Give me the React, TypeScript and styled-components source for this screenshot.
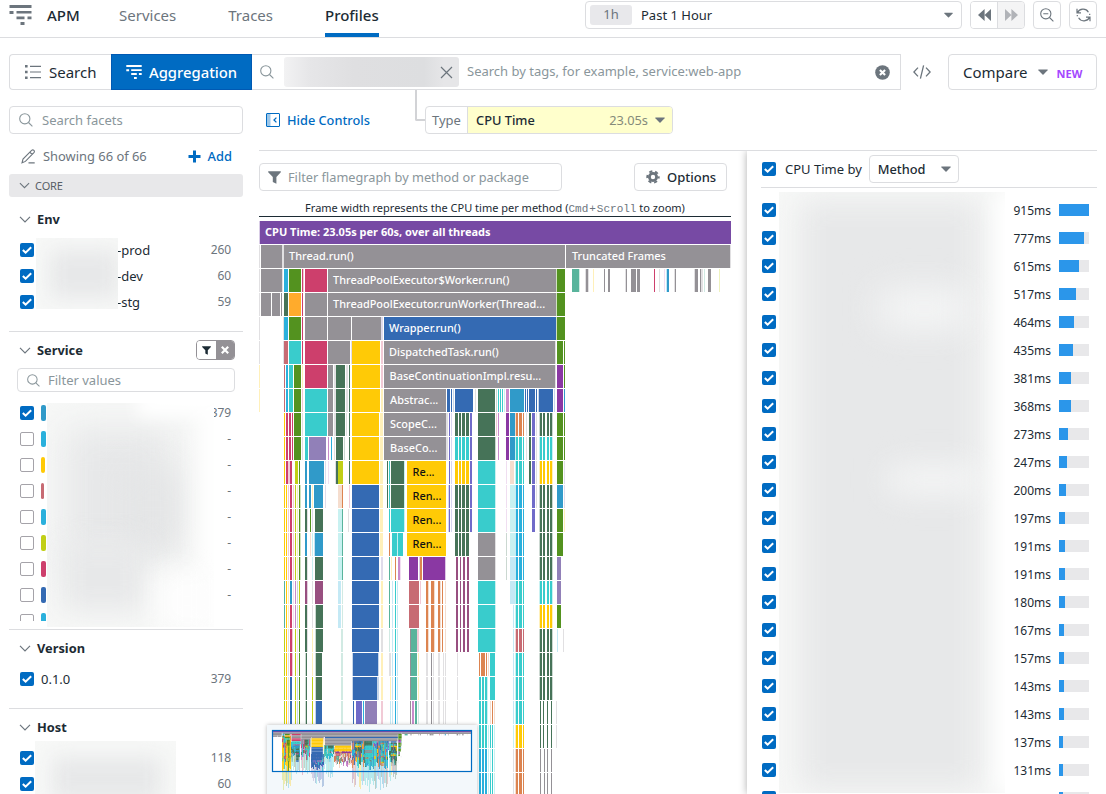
import React from 'react';
import styled, { createGlobalStyle, css } from 'styled-components';

const ink = '#1c2b34';
const muted = '#6c757d';
const faint = '#8a969b';
const line = '#dcdde0';
const blue = '#006bc2';

const Global = createGlobalStyle`
  * { box-sizing: border-box; }
  html, body { margin: 0; height: 794px; overflow: hidden; background: #fff; }
  body { font-family: 'Noto Sans', sans-serif; font-size: 13px; color: ${ink}; }
  svg { display: block; flex: none; }
`;

const Page = styled.div`
  width: 1106px;
  height: 794px;
  overflow: hidden;
  display: flex;
  flex-direction: column;
`;

/* ---------- top navigation ---------- */
const TopNav = styled.header`
  height: 38px;
  flex: none;
  display: flex;
  justify-content: space-between;
  border-bottom: 1px solid ${line};
  padding: 0 9px;
`;
const NavLinks = styled.nav`
  display: flex;
  height: 37px;
`;
const Brand = styled.div`
  display: flex;
  width: 110px;
  gap: 15px;
  font-size: 15px;
  font-weight: 500;
  line-height: 31px;
  svg { margin-top: 5px; }
`;
const NavLink = styled.a<{ $active?: boolean; $gap?: number }>`
  font-size: 15px;
  line-height: 31px;
  height: 37px;
  margin-right: ${p => p.$gap ?? 0}px;
  font-weight: ${p => (p.$active ? 500 : 400)};
  color: ${p => (p.$active ? ink : muted)};
  border-bottom: ${p => (p.$active ? `4px solid ${blue}` : 'none')};
`;
const TimeControls = styled.div`
  display: flex;
  padding-top: 1px;
  gap: 8px;
`;
const boxed = css`
  border: 1px solid ${line};
  border-radius: 4px;
  background: #fff;
  display: flex;
  align-items: center;
`;
const TimeSelect = styled.div`
  ${boxed}
  width: 377px;
  height: 28px;
  padding: 0 8px 0 4px;
  font-size: 13px;
  svg { margin-left: auto; }
`;
const TimeBadge = styled.span`
  width: 42px;
  height: 20px;
  margin-right: 9px;
  border-radius: 3px;
  background: #e8e8eb;
  color: ${muted};
  line-height: 19px;
  text-align: center;
`;
const ButtonPair = styled.div`
  ${boxed}
  width: 55px;
  height: 28px;
  overflow: hidden;
`;
const PairButton = styled.button<{ $off?: boolean }>`
  flex: 1;
  height: 26px;
  padding: 0;
  display: grid;
  place-items: center;
  border: 0;
  border-left: ${p => (p.$off ? `1px solid ${line}` : '0')};
  background: ${p => (p.$off ? '#f4f4f5' : '#fff')};
`;
const IconButton = styled.button`
  ${boxed}
  justify-content: center;
  width: 28px;
  height: 28px;
  padding: 0;
`;

/* ---------- query bar ---------- */
const QueryBar = styled.div`
  display: flex;
  height: 36px;
  flex: none;
  margin: 16px 9px 0;
`;
const ModeButton = styled.button<{ $active?: boolean; $w: number }>`
  display: flex;
  align-items: center;
  gap: ${p => (p.$active ? 7 : 8)}px;
  width: ${p => p.$w}px;
  height: 36px;
  padding: 0 0 0 ${p => (p.$active ? 14 : 15)}px;
  font: ${p => (p.$active ? '500 14.8px' : '400 15px')} 'Noto Sans', sans-serif;
  color: ${p => (p.$active ? '#fff' : ink)};
  background: ${p => (p.$active ? blue : '#fff')};
  border: 1px solid ${p => (p.$active ? '#0059b3' : line)};
  border-right-width: ${p => (p.$active ? 1 : 0)}px;
  border-radius: ${p => (p.$active ? '0' : '4px 0 0 4px')};
`;
const QueryInput = styled.div`
  display: flex;
  align-items: center;
  width: 649px;
  height: 36px;
  border: 1px solid ${line};
  border-left: 0;
  padding: 0 10px 0 8px;
  color: ${faint};
`;
const Chip = styled.div`
  width: 175px;
  height: 30px;
  margin: 0 8px 0 10px;
  padding-right: 6px;
  border-radius: 3px;
  display: flex;
  align-items: center;
  justify-content: flex-end;
  background: linear-gradient(90deg, #f2f2f3 0, #e6e6e8 26px, #dfdfe1 70px, #dddee0 140px, #e6e6e8 160px);
`;
const QueryHint = styled.span`
  flex: 1;
  line-height: 20px;
  padding-bottom: 2px;
`;
const CodeIcon = styled.div`
  width: 47px;
  display: grid;
  place-items: center;
  padding-right: 5px;
`;
const CompareButton = styled.button`
  ${boxed}
  width: 149px;
  height: 36px;
  padding: 0 0 0 14px;
  font: 15px 'Noto Sans', sans-serif;
  color: ${ink};
  svg { margin-left: 10px; }
`;
const NewTag = styled.span`
  margin: 3px 0 0 9px;
  font-size: 11px;
  font-weight: 700;
  color: #a447ff;
`;

/* ---------- body columns ---------- */
const Body = styled.div`
  display: flex;
  gap: 16px;
  padding: 16px 9px 0;
  flex: 1;
  min-height: 0;
`;
const Sidebar = styled.aside`
  width: 234px;
  flex: none;
  display: flex;
  flex-direction: column;
`;
const Input = styled.div<{ $w?: number; $h?: number; $size?: number; $gap?: number }>`
  ${boxed}
  width: ${p => (p.$w ? `${p.$w}px` : '100%')};
  height: ${p => p.$h ?? 28}px;
  padding-left: ${p => (p.$size ? 8 : 9)}px;
  gap: ${p => p.$gap ?? 8}px;
  flex: none;
  font-size: ${p => p.$size ?? 13}px;
  color: ${faint};
`;
const FacetSummary = styled.div`
  display: flex;
  align-items: center;
  height: 40px;
  flex: none;
  padding: 4px 11px 0 12px;
  gap: 7px;
  font-size: 12.9px;
  color: ${muted};
`;
const AddLink = styled.a`
  display: flex;
  align-items: center;
  gap: 7px;
  margin-left: auto;
  font-weight: 500;
  color: ${blue};
`;
const GroupBar = styled.div`
  display: flex;
  align-items: center;
  height: 23px;
  flex: none;
  gap: 5px;
  padding-left: 10px;
  border-radius: 3px;
  background: #e8e8ea;
  font-size: 11px;
  letter-spacing: -0.1px;
  color: #585f67;
  svg { width: 11px; }
`;
const Facet = styled.section<{ $top?: number; $bottom?: number }>`
  position: relative;
  flex: none;
  padding-top: ${p => p.$top ?? 5}px;
  padding-bottom: ${p => p.$bottom ?? 16}px;
  border-bottom: 1px solid ${line};
`;
const FacetTitle = styled.h3`
  display: flex;
  align-items: center;
  height: 26px;
  margin: 0 0 5px;
  padding: 0 8px 0 10px;
  gap: 6px;
  font-size: 12.8px;
  font-weight: 700;
`;
const FacetActions = styled.div`
  display: flex;
  width: 39px;
  height: 20px;
  margin-left: auto;
  border: 1px solid #949196;
  border-radius: 4px;
  overflow: hidden;
`;
const FacetAction = styled.span<{ $dark?: boolean }>`
  flex: 1;
  display: grid;
  place-items: center;
  background: ${p => (p.$dark ? '#949196' : '#fff')};
`;
const FacetInput = styled.div`
  padding: 0 8px;
`;
const ValueList = styled.div<{ $h?: number }>`
  margin-top: ${p => (p.$h ? 8 : 0)}px;
  height: ${p => (p.$h ? `${p.$h}px` : 'auto')};
  overflow: hidden;
`;
const ValueRow = styled.div`
  display: flex;
  align-items: center;
  height: 26px;
  padding: 0 12px 0 11px;
`;
const Swatch = styled.span<{ $c: string; $w: number }>`
  width: ${p => p.$w}px;
  height: 16px;
  margin-left: 7px;
  border-radius: 2px;
  background: ${p => p.$c};
`;
const ValueName = styled.span<{ $indent?: number }>`
  margin-left: ${p => p.$indent ?? 7}px;
  line-height: 20px;
`;
const ValueCount = styled.span`
  margin: -2px 0 0 auto;
  font-size: 12px;
  letter-spacing: -0.1px;
  color: ${muted};
`;
const CheckSquare = styled.span<{ $on?: boolean }>`
  width: 14px;
  height: 14px;
  flex: none;
  display: grid;
  place-items: center;
  border-radius: 2px;
  background: ${p => (p.$on ? blue : '#fff')};
  border: ${p => (p.$on ? '0' : '1px solid #a5a3a9')};
`;

/* hidden names are covered by soft grey patches */
const Redaction = styled.div<{ $x: number; $y: number; $w: number; $h: number }>`
  position: absolute;
  left: ${p => p.$x}px;
  top: ${p => p.$y}px;
  width: ${p => p.$w}px;
  height: ${p => p.$h}px;
  overflow: hidden;
  background: #f7f8f7;
`;
const Smudge = styled.div<{ $x: number; $y: number; $w: number; $h: number; $c?: string; $b?: number }>`
  position: absolute;
  left: ${p => p.$x}px;
  top: ${p => p.$y}px;
  width: ${p => p.$w}px;
  height: ${p => p.$h}px;
  background: ${p => p.$c ?? '#e7e8e9'};
  filter: blur(${p => p.$b ?? 10}px);
`;

/* ---------- main column ---------- */
const Main = styled.main`
  flex: 1;
  min-width: 0;
  display: flex;
  flex-direction: column;
`;
const ControlsRow = styled.div`
  display: flex;
  height: 45px;
  flex: none;
  border-bottom: 1px solid ${line};
`;
const HideControls = styled.a`
  display: flex;
  align-items: center;
  gap: 7px;
  width: 156px;
  height: 28px;
  padding-left: 7px;
  color: ${blue};
  font-size: 12.75px;
  font-weight: 500;
`;
const Elbow = styled.div`
  width: 10px;
  height: 31px;
  margin-top: -16px;
  border-left: 2px solid #d2d3d6;
  border-bottom: 2px solid #d2d3d6;
  border-radius: 0 0 0 2px;
`;
const TypeSelect = styled.div`
  ${boxed}
  width: 248px;
  height: 28px;
  overflow: hidden;
  color: ${muted};
`;
const TypeLabel = styled.span`
  width: 41px;
  padding-left: 6px;
`;
const TypeValue = styled.div`
  flex: 1;
  height: 26px;
  display: flex;
  align-items: center;
  padding: 0 7px 0 8px;
  border-left: 1px solid ${line};
  background: #ffffcc;
  color: ${ink};
  font-size: 12.8px;
  font-weight: 500;
`;
const TypeTime = styled.span`
  margin: 0 7px 0 auto;
  font-weight: 400;
  color: #858b7a;
`;
const Panels = styled.div`
  flex: 1;
  min-height: 0;
  display: flex;
  overflow: hidden;
`;
const FlamePanel = styled.section`
  position: relative;
  width: 488px;
  flex: none;
  padding-top: 12px;
`;
const FlameTools = styled.div`
  display: flex;
  justify-content: space-between;
  width: 468px;
`;
const OptionsButton = styled.button`
  ${boxed}
  width: 93px;
  height: 28px;
  gap: 7px;
  padding: 0 0 0 11px;
  font: 500 13px 'Noto Sans', sans-serif;
  color: ${ink};
`;
const Caption = styled.div`
  width: 472px;
  height: 26px;
  padding: 8px 0 0;
  line-height: 18px;
  font-size: 11px;
  text-align: center;
  border-bottom: 1px solid ${ink};
  margin-bottom: 4px;
  white-space: nowrap;
`;
const Kbd = styled.span<{ $joint?: boolean }>`
  font-family: 'Liberation Mono', monospace;
  color: ${muted};
  margin: 0 ${p => (p.$joint ? 1 : 0)}px;
`;
const Minimap = styled.div`
  position: absolute;
  left: 8px;
  top: 574px;
  width: 210px;
  height: 90px;
  background: #f3f8fb;
  box-shadow: 0 0 4px rgba(0, 0, 0, 0.28);
`;

const MethodPanel = styled.section`
  position: relative;
  flex: 1;
  background: #fff;
  padding-left: 14px;
  box-shadow: 0 0 8px rgba(0, 0, 0, 0.32);
`;
const MethodHead = styled.div`
  display: flex;
  align-items: center;
  height: 37px;
  padding: 0 0 0 1px;
  border-bottom: 1px solid ${line};
`;
const MethodHeadLabel = styled.span`
  margin: 0 7px 0 9px;
`;
const MethodSelect = styled.div`
  ${boxed}
  width: 90px;
  height: 28px;
  padding: 0 7px 0 8px;
  font-size: 12.8px;
  font-weight: 500;
  justify-content: space-between;
`;
const MethodList = styled.div`
  padding: 8px 8px 0 1px;
`;
const MethodRow = styled.div`
  display: flex;
  align-items: center;
  height: 28px;
`;
const MethodTime = styled.span`
  margin: 1px 8px 0 auto;
  font-size: 12px;
`;
const Track = styled.div`
  width: 30px;
  height: 12px;
  background: #e8e8ea;
`;
const Fill = styled.div`
  height: 12px;
  background: #2b96ea;
`;

/* ---------- icons ---------- */
const Lens = ({ size = 14, minus }: { size?: number; minus?: boolean }) => (
  <svg width={size} height={size} viewBox="0 0 14 14" fill="none" stroke={minus ? muted : faint} strokeWidth="1.1">
    <circle cx="5.8" cy="5.8" r="5.1" />
    <path d={minus ? 'M9.5 9.5 13.4 13.4M3.3 5.8h5' : 'M9.5 9.5 13.4 13.4'} />
  </svg>
);
const Caret = ({ w = 10 }: { w?: number }) => (
  <svg width={w} height="6" viewBox="0 0 10 6" fill={muted}><path d="M.6.4h8.8q.7.2.2.8L5.5 5.4q-.5.5-1 0L.4 1.2Q-.1.6.6.4Z" /></svg>
);
const Chevron = () => (
  <svg width="12" height="7" viewBox="0 0 12 7" fill="none" stroke={muted} strokeWidth="1.2"><path d="M1 .8 6 5.8 11 .8" /></svg>
);
const Funnel = ({ size, color }: { size: number; color: string }) => (
  <svg width={size} height={size} viewBox="0 0 13 13" fill={color}><path d="M.2.3h12.6v1L8.4 6v6.8L4.8 11V6L.2 1.3Z" /></svg>
);
const FlameIcon = ({ w, h, color }: { w: number; h: number; color: string }) => (
  <svg width={w} height={h} viewBox="0 0 22 20" fill={color}>
    <path d="M0 0h22v3H0zM0 6h4v3H0zM7 6h15v2.6H7zM7 11.4h8v2.8H7zM18 11.4h4v2.8h-4zM11 17h4v3h-4z" />
  </svg>
);
const ListIcon = () => (
  <svg width="16" height="14" viewBox="0 0 16 14" fill={muted}>
    <path d="M0 0h2.6v2.6H0zM0 5.7h2.6v2.6H0zM0 11.4h2.6V14H0zM5 .7h11v1.2H5zM5 6.4h11v1.2H5zM5 12.1h11v1.2H5z" />
  </svg>
);
const Check = ({ on = true }: { on?: boolean }) => (
  <CheckSquare $on={on}>
    {on && <svg width="10" height="8" viewBox="0 0 10 8" fill="none" stroke="#fff" strokeWidth="2"><path d="M.8 4 3.6 6.6 9.2 1.2" /></svg>}
  </CheckSquare>
);
const Rewind = ({ flip }: { flip?: boolean }) => (
  <svg width="13" height="12" viewBox="0 0 13 11" preserveAspectRatio="none" fill={flip ? '#b1b3b8' : muted}>
    <path d={flip ? 'M0 0 6.4 5.5 0 11ZM6.4 0 13 5.5 6.4 11Z' : 'M6.6 0v11L0 5.5ZM13 0v11L6.6 5.5Z'} />
  </svg>
);
const Refresh = () => (
  <svg width="15" height="14" viewBox="0 0 15 14" fill="none" stroke={muted} strokeWidth="1.2">
    <path d="M1 .8v4h4M1.4 4.6C3.5.6 9.8-.3 12.4 4.2M14 13.2v-4h-4M13.6 9.4c-2.1 4-8.4 4.9-11 .4M13.7 7V5.8M1.3 7v1.2" />
  </svg>
);
const Gear = () => (
  <svg width="14" height="14" viewBox="0 0 14 14" fill="none" stroke={muted}>
    <circle cx="7" cy="7" r="3.6" strokeWidth="2.8" />
    <circle cx="7" cy="7" r="5.7" strokeWidth="2" strokeDasharray="3.1 2.87" strokeDashoffset="1.5" />
  </svg>
);
const Pencil = () => (
  <svg width="15" height="15" viewBox="0 0 15 15" fill="none" stroke={muted} strokeWidth="1.1">
    <path d="M1 13.8 2 10 10.6 1.4q1.2-1 2.3 0 1 1.1 0 2.3L4.4 12.4ZM8.8 3.1l2.4 2.4M7.5 13.9h6.2" />
  </svg>
);
const HideIcon = () => (
  <svg width="14" height="14" viewBox="0 0 14 14" fill="none" stroke={blue}>
    <path d="M1 1h3.5v12H1z" fill="#9cc6e8" stroke="none" />
    <rect x=".5" y=".5" width="13" height="13" rx=".5" />
    <path d="M10.4 4.6 8 7l2.4 2.4" strokeWidth="1.3" />
  </svg>
);

/* ---------- flame graph ---------- */
const palette: Record<string, string> = {
  g: '#949196', G: '#53921f', D: '#467358', t: '#39cccc', y: '#ffca06', b: '#346ab3',
  B: '#309ac9', c: '#2ab0dc', m: '#cd3f6c', p: '#8a38a3', l: '#9180b8', i: '#706bc9',
  o: '#ffab2c', O: '#dc8450', r: '#c76b73', k: '#984f80', s: '#59b49c', L: '#c1cf16',
  a: '#c98acb', v: '#774aa4',
};

/* "start-end colour" in chart units; a trailing ~ marks a pale sliver */
const yTail = ' 380-383y~ ';
const low = ' 478-495t 495-496t~ ';
const dup = (c: string) => ` 455-458${c} 459-461${c} 462-465${c} 466-469${c} `;
const mid = (c: string) => ` 515-516${c}~ 516-518${c} 519-521${c} 521-522${c} 523-524${c} `;
const far = (c: string) => ` 539-540${c}~ 540-542${c} 543-545${c} 547-549${c} 550-552${c} 552-553${c}~ `;
const kk = ' 456-458k 460-461k 463-465k 467-469k ';
const rust = ' 426-428O 428-429O~ 431-434O 434-435O~ 438-440O 440-441O~ 442-443O 445-446O~ ';
const grayTail = ' 426-428g~ 431-432g 433-434g~ 438-440g~ 443-444g~ 445-446g~ 457-458g~ ';
const leftA = ' 284-285y 286-287y 288-289m~ 290-292m 293-294m~ 295-296L 297-298L~ 299-300G 300-301G~ ';
const leftB = ' 284-285s 286-287y 288-289y~ 290-292m 293-294a~ 295-296a 297-298D~ 299-300L ';
const leftC = ' 284-285L 286-287y 288-289g~ 290-292m 292-293m~ 295-296L 297-298a~ 299-300G ';
const leftD = ' 284-285L 286-287y 288-289g~ 290-292b 295-296L 297-298b~ 299-300G ';

const rows: string[] = [
  '259-260v~ 260-731v',
  '259-260g~ 261-282g 282-284g~ 284-565g 566-730g 730-731g~',
  '259-260g~ 261-282g 282-283g~ 284-288c 289-301G 302-303m 303-304m~ 305-327m 328-556g 556-557G~ 557-565G 572-579s 579-580s~ 585-586g~ 586-588g 588-589g~ 593-594y~ 604-605g 608-610g 625-626g~ 626-627g 631-636g 637-640g 654-655m 659-660g~ 664-665a~ 666-667c~ 667-669B 674-675g~ 675-676g 694-695g~ 695-698g 700-701g 701-703g~ 704-705s~ 708-711g 719-720L~',
  '259-260g~ 261-271g 272-280g 281-282g 284-288D 289-301o 302-303m 305-327g 328-556g 556-557G~ 557-565G',
  '259-260g~ 283-284g~ 284-288c 289-301G 302-303m 305-327g 328-351g 352-381g 381-383l~ 384-556b 556-557G~ 557-565G',
  '259-260g~ 283-284g~ 284-288r 289-301t 302-303m 305-327m 328-350g 351-352l~ 352-380y 381-383m~ 384-555g 555-556g~ 557-563G 564-565G',
  '259-260y~ 284-285r 286-288c 289-293t 294-301G 302-303y~ 305-327m 328-333g 334-336g~ 336-345D 346-348g~ 349-350D 352-380y 381-383m~ 384-555g 555-556g~ 557-563p 564-565G',
  '259-260y~ 284-285r 286-288c 289-293t 294-301G 302-303m~ 305-327t 328-333g 334-336g~ 336-345D 346-348g~ 349-350D 352-380y 381-383y~ 384-446g 447-450b 451-452b 453-454b~ 455-473b 475-476g~ 478-495D 496-497D~ 498-499t 500-501t 502-503t 504-505t~ 506-509a 510-524B 525-526b 527-528b 529-535b 536-537b 538-539b~ 539-553b 554-555b~ 557-563p 564-565B',
  '284-285y 286-288m 289-291m 292-293m 294-301G 302-303g~ 305-327t 328-333g 334-336g~ 336-345D 346-347g~ 349-350D 352-379y' + yTail + '384-446g 446-448g~ 449-450i 451-452i~' + dup('D') + '470-472i 478-495D 496-497m~ 498-499a 506-509p 510-515B' + mid('O') + '526-527g~ 529-531D 532-535i 536-537g~' + far('D') + '557-563G 564-565G',
  '284-285y 286-288m 289-291m 292-293m 294-301G 302-303g~ 305-308t 309-326l 328-329a 331-332c 334-335g~ 336-343D 344-345D~ 349-350D 352-379y' + yTail + '384-446g 446-448g~ 449-450i 451-452i~' + dup('t') + '470-472i 478-495D 495-496D~ 498-499a 506-509p 510-515B' + mid('t') + '526-527g~ 529-531D 532-535i 536-537g~' + far('t') + '557-563G 564-565G',
  '284-285y 286-288m 288-290m~ 290-292m 295-298L 299-300G 305-307B 309-324B 325-326l~ 328-329a~ 335-336g~ 336-338D 338-343L 349-350D 352-379y' + yTail + '387-388D 389-390t 391-404D 404-405t~ 407-446y 449-450i 451-452i~' + dup('y') + '470-472i' + low + '506-507a~ 510-514O~' + mid('t') + '529-531D 532-535i 536-537g~' + far('y') + '557-563G 564-565l~',
  leftA + '305-307B 309-311B 312-313y~ 314-323B 325-326l~ 338-342O~ 342-343O 349-350m~ 352-379b' + yTail + '387-388D 389-390t 391-404D 404-405t~ 407-446y 448-449i~ 449-450i 451-452i~' + dup('D') + '470-472i' + low + '506-507a~ 510-515t~' + mid('c') + '532-535i 536-537g~' + far('D') + '557-563B 564-565l~',
  leftA + '305-307D 307-308g~ 310-311G 312-313l~ 315-323D 338-342t~ 342-343s 348-349g~ 352-379b' + yTail + '389-390t 391-404t 404-405t~ 407-446y 448-449i~ 449-450i 451-452i~' + dup('D') + '470-472i' + low + '506-507a~ 510-515t~' + mid('c') + '532-535i' + far('D') + '557-563G 564-565y~',
  leftA + '305-307B 310-311O~ 312-313t~ 314-315B~ 315-323B 338-342t~ 342-343s 352-379b' + yTail + '389-390O 392-397t 397-398t~ 398-403t 407-446y' + dup('D') + '478-495g 495-496g~ 506-507D~ 510-515t~' + mid('c') + far('D') + '557-563G',
  leftA + '305-307D 307-308g~ 312-313t~ 315-323D 338-342t~ 342-343s 352-379b 381-383l~ 389-390s 391-392y~ 395-396O 398-400a 400-401a~ 409-418p 419-420p~ 420-422O 423-445p 445-446p~' + kk + '478-495g 495-496g~ 506-507D~ 510-515c~' + mid('c') + far('D') + '557-561l',
  leftB.replace('290-292m', '290-292B') + '305-307k 307-308k~ 312-313g~ 315-323k 338-341c~ 342-343s~ 352-379b 381-383y~ 389-390s 392-393c~ 395-396t 397-398c~ 409-419r 420-421m~' + rust + kk + low + '510-515c~' + mid('t') + far('t') + '557-561l',
  leftB + '305-307D 307-308g~ 312-313g~ 315-316D~ 316-323D 338-341c~ 342-343s~ 352-379b 381-383y~ 389-390s 392-393c~ 395-396t 397-398c~ 409-419r' + rust + kk + low + '513-514c~' + mid('t') + far('y') + '557-561G',
  leftC + '305-307D 307-308g~ 312-313y~ 315-316D~ 316-323D 341-343s~ 352-379b 381-383g~ 389-390s~ 392-393c~ 395-396t 397-398c~ 410-411g 411-417s 417-419m~' + rust + kk + low + '513-514c~' + mid('r') + far('D') + '557-558c~ 563-564g~',
  leftC + '305-306D~ 306-307D 312-313y~ 315-316D~ 316-322D 341-343s~ 352-353b~ 353-378b 378-379b~ 381-383y~ 389-391g~ 392-393c~ 395-396c 397-398c~ 410-411g 411-417s 418-419y~' + grayTail + '479-480O 481-483O 483-485O 486-487O 488-489O~ 490-495t 513-514c~' + mid('t') + far('D'),
  leftD + '305-306D~ 306-307D 312-313L 315-316D~ 316-322D 341-343s~ 352-353b~ 353-377b 377-379b~ 381-383y~ 390-391y~ 392-393c~ 395-396c 397-398c~ 410-411g 411-417s 418-419y~' + grayTail + '479-481t 482-484t 485-487t 487-488t~ 490-495t 513-514c~' + mid('t') + far('D'),
  leftD + '305-306D~ 306-307D 312-313L 315-316b~ 316-322b 341-343s~ 353-354b 356-362i 363-364c 365-377l 381-383m~ 390-391c~ 392-393c~ 395-396c 397-398c~ 410-411g 412-414a 415-417s 418-419s~' + grayTail + '479-481t 482-484t 485-487t 487-488t~ 490-491O~ 492-493O 494-495O~ 513-514c~' + mid('t') + ' 540-541D 543-544D 547-548D 551-552D 556-557g~',
  '479-481t 482-484t 485-487t 488-489t~ 490-491t 492-493t 494-495t~ 513-514t~' + mid('y') + '540-541D 543-544D 547-548D 551-552D 556-557g~',
  '479-481c 482-484c 485-487c 488-489t~ 490-491t~ 492-493t 494-495t~ 513-514g~' + mid('O') + '540-541g 544-545g 547-548g 551-552g',
  '479-481c 482-484c 485-487c 488-489t~ 490-491t 492-493t 494-495t~ 513-514g~' + mid('O') + '540-541g 544-545g 547-548g 551-552g',
];

const labels: [number, number, string, string?][] = [
  [265, 0, 'CPU Time: 23.05s per 60s, over all threads', 'bold'],
  [289, 1, 'Thread.run()'], [572, 1, 'Truncated Frames'],
  [333, 2, 'ThreadPoolExecutor$Worker.run()'],
  [333, 3, 'ThreadPoolExecutor.runWorker(Thread...'],
  [389, 4, 'Wrapper.run()'], [389, 5, 'DispatchedTask.run()'],
  [389.5, 6, 'BaseContinuationImpl.resu...'], [390, 7, 'Abstrac...'],
  [390, 8, 'ScopeC...'], [390, 9, 'BaseCo...'],
  [412.5, 10, 'Re...', 'dark'], [412.5, 11, 'Ren...', 'dark'], [412.5, 12, 'Ren...', 'dark'], [412.5, 13, 'Ren...', 'dark'],
];

const FlameRects = ({ height = 23 }: { height?: number }) => (
  <>
    {rows.map((row, r) =>
      row.trim().split(/\s+/).map((cell, n) => {
        const m = /^(\d+)-(\d+)(\w)(~?)$/.exec(cell);
        if (!m) return null;
        return <rect key={`${r}-${n}`} x={+m[1] - 259} y={r * 24} width={+m[2] - +m[1]} height={height} fill={palette[m[3]]} opacity={m[4] ? 0.28 : 1} />;
      }),
    )}
  </>
);

const FlameText = styled.text<{ $kind?: string }>`
  font: ${p => (p.$kind === 'bold' ? '700 11px' : '500 10.93px')} 'Noto Sans', sans-serif;
  fill: ${p => (p.$kind === 'dark' ? '#111' : '#fff')};
`;

const FlameGraph = () => (
  <svg width="472" height="573" viewBox="0 0 472 573" shapeRendering="crispEdges">
    <FlameRects />
    {labels.map(([x, r, text, kind], n) => (
      <FlameText key={n} x={x - 259} y={r * 24 + 15} $kind={kind}>{text}</FlameText>
    ))}
  </svg>
);

/* the overview repeats the chart at small scale over dense call columns:
   from, to, top, end of the vivid part, end of the faded tail, lead colours */
const spans: [number, number, number, number, number, string][] = [
  [10, 19, 6, 42, 63, 'yymLGtyc'],
  [19, 28, 12, 28, 52, 'tBDtcDs'],
  [29, 38, 9, 30, 46, 'Dtatmst'],
  [39, 52, 24, 41, 58, 'bblibtb'],
  [52, 62, 15, 24, 50, 'tctDtst'],
  [62, 80, 22, 25, 40, 'OapOrsO'],
  [80, 92, 11, 38, 60, 'bDtOyckt'],
  [92, 101, 11, 41, 63, 'tttDcBt'],
  [101, 116, 10, 39, 60, 'BcOtriDcy'],
  [117, 125, 13, 36, 56, 'DtyDktb'],
];
const OverviewColumns = () => (
  <>
    {spans.flatMap(([from, to, top, solid, end, mix], s) =>
      Array.from({ length: to - from }, (_, n) => {
        const seed = (n * 37 + s * 53 + n * n * 11) % 97;
        const pick = (k: number) => palette[mix[(seed + k) % mix.length]];
        const x = from + n;
        const vivid = solid - (seed % 9);
        const tail = vivid + ((end - vivid) * (40 + (seed % 60))) / 100;
        return (
          <g key={`${s}-${n}`}>
            <rect x={x} y={top} width="1" height={vivid - top} fill={pick(0)} opacity="0.9" />
            <rect x={x} y={top + 3 + (seed % 7)} width="1" height={3 + (seed % 4)} fill={pick(2)} />
            <rect x={x} y={top + (vivid - top) * 0.6} width="1" height="3" fill={pick(5)} opacity="0.8" />
            <rect x={x} y={vivid} width="1" height={tail - vivid} fill={pick(3)} opacity="0.32" />
          </g>
        );
      }),
    )}
  </>
);
const Overview = () => (
  <svg width="210" height="69" viewBox="0 0 210 69">
    <rect x="5.7" y="5.7" width="198.8" height="41" fill="#fff" />
    <g transform="translate(5 5)" shapeRendering="crispEdges">
      <OverviewColumns />
    </g>
    <svg x="5" y="6" width="200" height="35" viewBox="0 0 472 573" preserveAspectRatio="none">
      <FlameRects height={24} />
    </svg>
    <rect x="5.5" y="5.5" width="199" height="41" fill="none" stroke={blue} strokeWidth="1.2" />
  </svg>
);

/* ---------- data ---------- */
const envs: [string, number][] = [['-prod', 260], ['-dev', 60], ['-stg', 59]];
const services: [string, number][] = [
  ['#309ac9', 5], ['#2ab0dc', 5], ['#ffca06', 4], ['#c76b73', 3], ['#2ab0dc', 5],
  ['#c1cf16', 5], ['#cd3f6c', 5], ['#346ab3', 5], ['#2ab0dc', 5],
];
const times = [915, 777, 615, 517, 464, 435, 381, 368, 273, 247, 200, 197, 191, 191, 180, 167, 157, 143, 143, 137, 131];

export default function App() {
  return (
    <Page>
      <Global />
      <TopNav>
        <NavLinks>
          <Brand><FlameIcon w={23} h={20} color={muted} />APM</Brand>
          <NavLink $gap={52}>Services</NavLink>
          <NavLink $gap={52}>Traces</NavLink>
          <NavLink $active>Profiles</NavLink>
        </NavLinks>
        <TimeControls>
          <TimeSelect><TimeBadge>1h</TimeBadge>Past 1 Hour<Caret w={9} /></TimeSelect>
          <ButtonPair>
            <PairButton><Rewind /></PairButton>
            <PairButton $off><Rewind flip /></PairButton>
          </ButtonPair>
          <IconButton><Lens minus /></IconButton>
          <IconButton><Refresh /></IconButton>
        </TimeControls>
      </TopNav>

      <QueryBar>
        <ModeButton $w={102}><ListIcon />Search</ModeButton>
        <ModeButton $active $w={141}><FlameIcon w={16} h={14} color="#fff" />Aggregation</ModeButton>
        <QueryInput>
          <Lens />
          <Chip>
            <svg width="13" height="13" viewBox="0 0 13 13" stroke={muted} strokeWidth="1.2"><path d="m1 1 11 11M12 1 1 12" /></svg>
          </Chip>
          <QueryHint>Search by tags, for example, service:web-app</QueryHint>
          <svg width="15" height="15" viewBox="0 0 15 15"><circle cx="7.5" cy="7.5" r="7.3" fill={muted} /><path d="m4.9 4.9 5.2 5.2M10.1 4.9l-5.2 5.2" stroke="#fff" strokeWidth="2.1" /></svg>
        </QueryInput>
        <CodeIcon>
          <svg width="18" height="14" viewBox="0 0 18 14" fill="none" stroke={muted} strokeWidth="1.3"><path d="M5 2.6.9 7 5 11.4M13 2.6 17.1 7 13 11.4M10.6.4 7.4 13.6" /></svg>
        </CodeIcon>
        <CompareButton>Compare<Caret /><NewTag>NEW</NewTag></CompareButton>
      </QueryBar>

      <Body>
        <Sidebar>
          <Input $gap={9}><Lens />Search facets</Input>
          <FacetSummary>
            <Pencil />Showing 66 of 66
            <AddLink>
              <svg width="13" height="13" viewBox="0 0 13 13" stroke={blue} strokeWidth="3"><path d="M6.5.5v12M.5 6.5h12" /></svg>
              Add
            </AddLink>
          </FacetSummary>
          <GroupBar><Chevron />CORE</GroupBar>

          <Facet $top={9}>
            <FacetTitle><Chevron />Env</FacetTitle>
            <ValueList>
              {envs.map(([name, count]) => (
                <ValueRow key={name}><Check /><ValueName $indent={83}>{name}</ValueName><ValueCount>{count}</ValueCount></ValueRow>
              ))}
            </ValueList>
            <Redaction $x={27} $y={41} $w={82} $h={71}><Smudge $x={14} $y={12} $w={68} $h={48} /></Redaction>
          </Facet>

          <Facet $bottom={8}>
            <FacetTitle>
              <Chevron />Service
              <FacetActions>
                <FacetAction><Funnel size={9} color={ink} /></FacetAction>
                <FacetAction $dark><svg width="8" height="8" viewBox="0 0 8 8" stroke="#fff" strokeWidth="2.2"><path d="m.8.8 6.4 6.4M7.2.8.8 7.2" /></svg></FacetAction>
              </FacetActions>
            </FacetTitle>
            <FacetInput><Input $h={24}><Lens size={13} />Filter values</Input></FacetInput>
            <ValueList $h={221}>
              {services.map(([color, w], n) => (
                <ValueRow key={n}><Check on={n === 0} /><Swatch $c={color} $w={w} /><ValueCount>{n === 0 ? 379 : '-'}</ValueCount></ValueRow>
              ))}
            </ValueList>
            <Redaction $x={38} $y={71} $w={167} $h={224}>
              <Smudge $x={16} $y={24} $w={110} $h={130} $b={18} />
              <Smudge $x={80} $y={66} $w={52} $h={80} $b={16} $c="#e4e5e6" />
              <Smudge $x={14} $y={140} $w={84} $h={68} $b={14} />
              <Smudge $x={90} $y={-16} $w={90} $h={30} $b={9} $c="#fff" />
              <Smudge $x={152} $y={0} $w={60} $h={240} $b={12} $c="#fff" />
              <Smudge $x={110} $y={168} $w={60} $h={60} $b={12} $c="#fdfdfd" />
            </Redaction>
          </Facet>

          <Facet>
            <FacetTitle><Chevron />Version</FacetTitle>
            <ValueRow><Check /><ValueName>0.1.0</ValueName><ValueCount>379</ValueCount></ValueRow>
          </Facet>

          <Facet>
            <FacetTitle><Chevron />Host</FacetTitle>
            {[118, 60].map(n => <ValueRow key={n}><Check /><ValueCount>{n}</ValueCount></ValueRow>)}
            <Redaction $x={26} $y={32} $w={141} $h={60}><Smudge $x={18} $y={16} $w={108} $h={44} /></Redaction>
          </Facet>
        </Sidebar>

        <Main>
          <ControlsRow>
            <HideControls><HideIcon />Hide Controls</HideControls>
            <Elbow />
            <TypeSelect>
              <TypeLabel>Type</TypeLabel>
              <TypeValue>CPU Time<TypeTime>23.05s</TypeTime><Caret /></TypeValue>
            </TypeSelect>
          </ControlsRow>
          <Panels>
            <FlamePanel>
              <FlameTools>
                <Input $w={303} $size={12.75} $gap={7}><Funnel size={13} color={muted} />Filter flamegraph by method or package</Input>
                <OptionsButton><Gear />Options</OptionsButton>
              </FlameTools>
              <Caption>Frame width represents the CPU time per method (<Kbd>Cmd</Kbd><Kbd $joint>+</Kbd><Kbd>Scroll</Kbd> to zoom)</Caption>
              <FlameGraph />
              <Minimap><Overview /></Minimap>
            </FlamePanel>
            <MethodPanel>
              <MethodHead>
                <Check /><MethodHeadLabel>CPU Time by</MethodHeadLabel>
                <MethodSelect>Method<Caret /></MethodSelect>
              </MethodHead>
              <MethodList>
                {times.map((t, n) => (
                  <MethodRow key={n}>
                    <Check /><MethodTime>{t}ms</MethodTime>
                    <Track><Fill style={{ width: `${(t / 915) * 30}px` }} /></Track>
                  </MethodRow>
                ))}
                <MethodRow>
                  <Check /><MethodTime />
                  <Track><Fill style={{ width: '4px' }} /></Track>
                </MethodRow>
              </MethodList>
              <Redaction $x={32} $y={41} $w={226} $h={601}>
                <Smudge $x={20} $y={8} $w={182} $h={590} $b={15} />
                <Smudge $x={100} $y={100} $w={90} $h={34} $b={18} $c="#f7f8f8" />
                <Smudge $x={110} $y={276} $w={90} $h={24} $b={16} $c="#f8f9f9" />
                <Smudge $x={216} $y={0} $w={50} $h={601} $b={10} $c="#fff" />
              </Redaction>
            </MethodPanel>
          </Panels>
        </Main>
      </Body>
    </Page>
  );
}
